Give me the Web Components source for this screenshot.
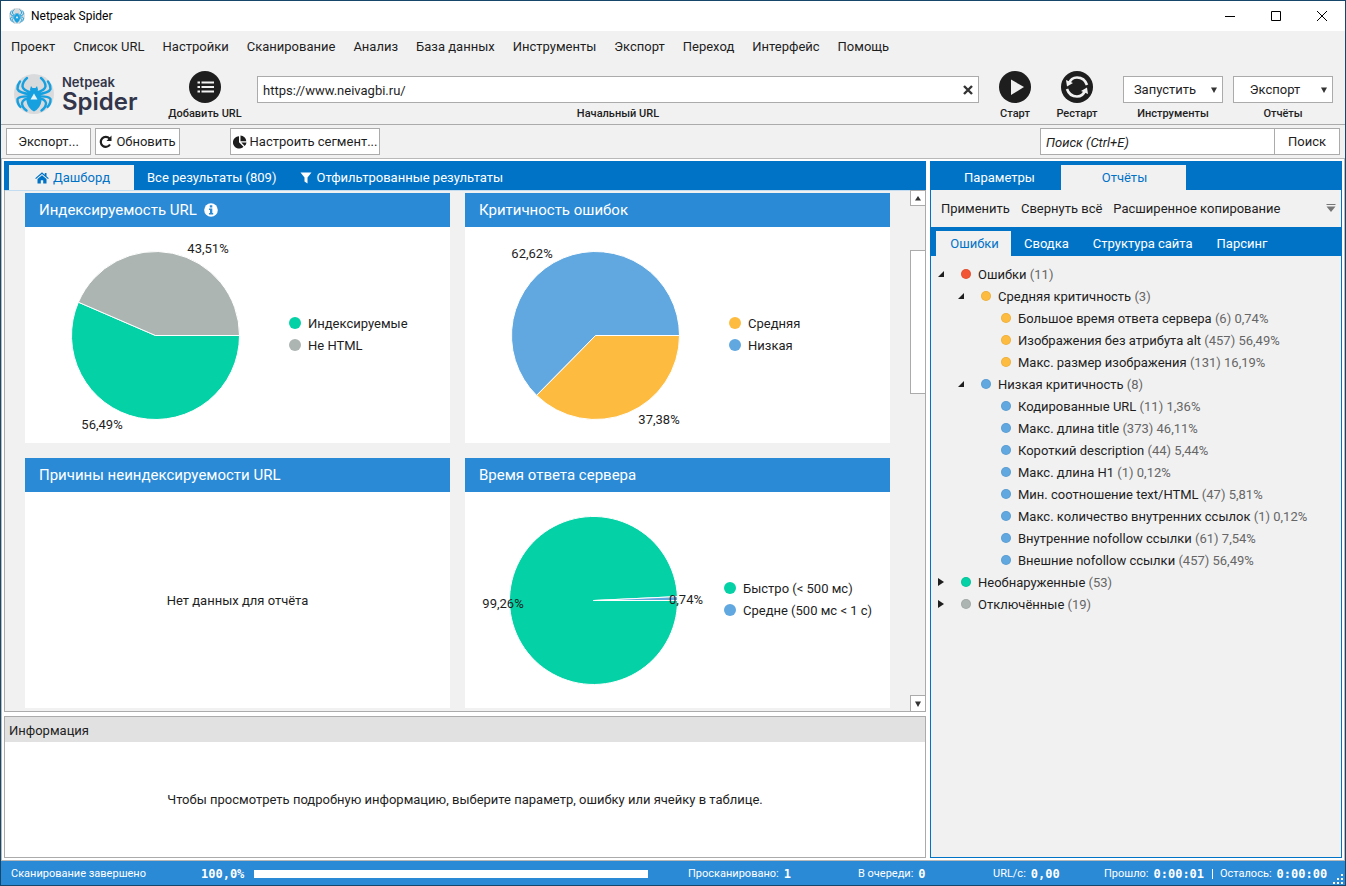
<!DOCTYPE html>
<html lang="ru">
<head>
<meta charset="utf-8">
<title>Netpeak Spider</title>
<style>
html,body{margin:0;height:100%}
body{font:13px/19px Roboto,"Noto Sans",sans-serif;color:#1e1e1e;
--bar:#0173c7;--head:#2b8ad6;--bg:#f1f1f1;--line:#ababab;--mid:#fdbc40;--low:#61a8e0;--ok:#04d1a5;--off:#adb5b3;--err:#f25533}
</style>
</head>
<body>
<spider-app></spider-app>
<script>
const define=(name,html,setup)=>{
  const t=document.createElement('template');
  t.innerHTML='<style>*{box-sizing:border-box}button,input,select{font:inherit;color:inherit;margin:0;border-radius:0}</style>'+html;
  customElements.define(name,class extends HTMLElement{
    constructor(){
      super();
      this.attachShadow({mode:'open'}).append(t.content.cloneNode(true));
    }
    connectedCallback(){ if(setup&&!this.ready){this.ready=true;setup(this,this.shadowRoot)} }
  });
};

const ICONS={
  spider:['0 0 40 40','<circle cx="20" cy="20" r="20" fill="#d9dadc"/><g fill="none" stroke="#16a0e0" stroke-width="2.4" stroke-linejoin="round" stroke-linecap="round"><path d="M17 18.500C12 17 9 15 8.500 12.500C8.500 9 10 6.500 13 4M17 20.500C10 19.500 4.500 18 3.500 15C3.300 12 4 10 6 7.500M17 22.500C10 22 5 22.500 3.500 25C3.300 28 4.500 31 6.500 33M17 24C11 24.500 8.500 26.500 8 29C8 32 9.500 34.500 12.500 36.500"/><path d="M23 18.500C28 17 31 15 31.500 12.500C31.500 9 30 6.500 27 4M23 20.500C30 19.500 35.500 18 36.500 15C36.700 12 36 10 34 7.500M23 22.500C30 22 35 22.500 36.500 25C36.700 28 35.500 31 33.500 33M23 24C29 24.500 31.500 26.500 32 29C32 32 30.500 34.500 27.500 36.500"/></g><path fill="#16a0e0" d="M17 12L18.500 14H21.500L23 12L24 15.500L23.500 18Q27.500 22 27.500 27Q26.500 34 20 37.500Q13.500 34 12.500 27Q12.500 22 16.500 18L16 15.500Z"/><path fill="#e6f3fa" d="M20 19.500L23.500 25.500H16.500Z"/>'],
  list:['0 0 32 32','<circle cx="16" cy="16" r="16" fill="#1e1e1e"/><path stroke="#f1f1f1" stroke-width="2" d="M8.500 11.500H11M12.500 11.500H25M8.500 16H11M12.500 16H25M8.500 20.500H11M12.500 20.500H25"/>'],
  play:['0 0 32 32','<circle cx="16" cy="16" r="16" fill="#1e1e1e"/><path fill="#f1f1f1" d="M12 8.500L25 16L12 24Z"/>'],
  restart:['0 0 32 32','<circle cx="16" cy="16" r="16" fill="#1e1e1e"/><g fill="none" stroke="#f1f1f1" stroke-width="2.600"><path d="M8 12.500Q10 6.500 16 6.500Q23.500 6.500 26 14"/><path d="M24 19.500Q22 25.500 16 25.500Q8.500 25.500 6 18"/></g><path fill="#f1f1f1" d="M5 9L12 12L6 15.500ZM27 23L20 20L26 16.500Z"/>'],
  clear:['0 0 12 12','<path d="M2 2L10 10M10 2L2 10" stroke="#333" stroke-width="2.400"/>'],
  refresh:['0 0 14 14','<path d="M11 9.500A5 5 0 1 1 10.500 3.500" fill="none" stroke="#1e1e1e" stroke-width="2.200"/><path fill="#1e1e1e" d="M12.500 0.500V6H7.500Z"/>'],
  pie:['0 0 14 14','<path fill="#1e1e1e" d="M6 1.200V7.300L10.500 11.800A6.200 6.200 0 1 1 6 1.200Z"/><path fill="#1e1e1e" d="M7.500 0.500A6.200 6.200 0 0 1 13.300 6.300H7.500ZM8.300 7.500H13.500A6 6 0 0 1 11.700 11Z"/>'],
  home:['0 0 14 14','<path fill="currentColor" d="M7 1.300L9.800 3.700V2H11.500V5.200L13.800 7.200L13 8.100L7 3L1 8.100L0.200 7.200ZM2.500 8L7 4.200L11.500 8V12.500H8.200V9.300H5.800V12.500H2.500Z"/>'],
  filter:['0 0 12 12','<path fill="currentColor" d="M0.500 0.500H11.500L7.500 5.500V11.500L4.500 9.500V5.500Z"/>'],
  info:['0 0 14 14','<circle cx="7" cy="7" r="6.800" fill="#fff"/><path fill="#2b8ad6" d="M5.800 2.300H8.300V4.500H5.800ZM5 5.500H8.300V10H9.200V11.500H5V10H6V7H5Z"/>'],
  down:['0 0 8 8','<path fill="#333" d="M1 1.500H7L4 7Z"/>'],
  up:['0 0 8 8','<path fill="#333" d="M1 6.500H7L4 2Z"/>'],
  more:['0 0 10 10','<path fill="#777" d="M0.500 0H9.500V1H0.500ZM0.500 2.500H9.500L5 8Z"/>'],
  open:['0 0 8 8','<path fill="#1e1e1e" d="M7 1V7H1Z"/>'],
  shut:['0 0 8 8','<path fill="#1e1e1e" d="M1 0L7 4L1 8Z"/>'],
  min:['0 0 10 10','<path d="M0 5.500H10" stroke="#000"/>'],
  max:['0 0 10 10','<path d="M0.500 0.500H9.500V9.500H0.500Z" stroke="#000" fill="none"/>'],
  close:['0 0 10 10','<path d="M0 0L10 10M10 0L0 10" stroke="#000"/>'],
  grip:['0 0 12 12','<path fill="#fff" d="M9 1h2v2h-2zM9 5h2v2h-2zM9 9h2v2h-2zM5 5h2v2h-2zM5 9h2v2h-2zM1 9h2v2h-2z"/>']
};
define('ui-icon','<style>:host{display:block;flex:none;width:var(--s,12px);height:var(--s,12px)}svg{display:block;width:100%;height:100%}</style><svg aria-hidden="true"></svg>',(h,r)=>{
  const [vb,body]=ICONS[h.getAttribute('name')];
  const s=r.querySelector('svg'); s.setAttribute('viewBox',vb); s.innerHTML=body;
  if(h.hasAttribute('size')) h.style.setProperty('--s',h.getAttribute('size')+'px');
});

define('title-bar',`<style>:host{display:flex;align-items:center;height:30px;background:#fff;padding-left:8px;gap:6px;color:#000;font-size:12px;line-height:16px}
span{flex:1}button{width:46px;height:30px;border:0;background:none;padding:0;display:grid;place-items:center}nav{display:flex}</style>
<ui-icon name="spider" size="16"></ui-icon><span>Netpeak Spider</span>
<nav><button aria-label="Свернуть"><ui-icon name="min" size="10"></ui-icon></button><button aria-label="Развернуть"><ui-icon name="max" size="10"></ui-icon></button><button aria-label="Закрыть"><ui-icon name="close" size="10"></ui-icon></button></nav>`);

define('main-menu',`<style>:host{display:block}nav{display:flex;gap:18px;height:31px;align-items:center;padding:0 10px}button{border:0;background:none;padding:0;white-space:nowrap}</style><nav></nav>`,(h,r)=>{
  r.querySelector('nav').innerHTML=h.getAttribute('items').split('|').map(x=>`<button>${x}</button>`).join('');
});

define('tool-button',`<style>:host{display:block}button{border:0;background:none;padding:0;display:flex;flex-direction:column;align-items:center;gap:3px;width:100%;font-size:11px;line-height:16px;font-weight:500;white-space:nowrap}</style><button><slot></slot></button>`,(h,r)=>{
  const i=document.createElement('ui-icon'); i.setAttribute('name',h.getAttribute('icon')); i.setAttribute('size','32');
  r.querySelector('button').prepend(i);
});

define('tool-select',`<style>:host{display:block;width:100px}label{display:flex;flex-direction:column;align-items:center;gap:3px;font-size:11px;line-height:16px;font-weight:500}
div{position:relative;width:100%;height:27px;font-size:13px;font-weight:400}select{appearance:none;width:100%;height:27px;border:1px solid var(--line);background:#fff;padding:1px 16px 0 0;text-align:center;text-align-last:center}
ui-icon{position:absolute;right:5px;top:10px;pointer-events:none}</style><label><div><select><option></option></select><ui-icon name="down" size="8"></ui-icon></div><span></span></label>`,(h,r)=>{
  r.querySelector('option').textContent=h.getAttribute('value'); r.querySelector('span').textContent=h.getAttribute('caption');
});

define('brand-logo',`<style>:host{display:flex;align-items:center;gap:8px;font-family:Inter,sans-serif;color:#33364a;font-weight:600}
div{padding-top:2px}b{display:block;font-size:13px;line-height:14px;font-weight:600}b+b{font-size:24px;line-height:26px}</style>
<ui-icon name="spider" size="40"></ui-icon><div><b>Netpeak</b><b>Spider</b></div>`);

define('main-toolbar',`<style>:host{display:flex;height:63px;padding:9px 12px 0 13px;border-bottom:1px solid var(--line);align-items:flex-start}
brand-logo{width:153px;height:46px}.url{flex:1;margin:5px 20px 0 14px;display:flex;flex-direction:column;gap:3px;font-size:11px;line-height:16px;font-weight:500;text-align:center}
.box{display:flex;align-items:center;height:27px;background:#fff;border:1px solid var(--line);padding-right:4px}
input{flex:1;min-width:0;border:0;outline:0;background:none;padding:1px 5px 0;font-size:13px;font-weight:400;height:25px}
.box button{border:0;background:none;padding:0}
.add{width:76px}.st{width:32px}.re{width:44px;margin:0 24px}.sel{display:flex;gap:10px;padding-top:5px}</style>
<brand-logo></brand-logo><tool-button class="add" icon="list">Добавить URL</tool-button>
<div class="url"><div class="box"><input id="u" type="text" value="https://www.neivagbi.ru/"><button aria-label="Очистить"><ui-icon name="clear" size="12"></ui-icon></button></div><label for="u">Начальный URL</label></div>
<tool-button class="st" icon="play">Старт</tool-button><tool-button class="re" icon="restart">Рестарт</tool-button>
<div class="sel"><tool-select value="Запустить" caption="Инструменты"></tool-select><tool-select value="Экспорт" caption="Отчёты"></tool-select></div>`);

define('action-bar',`<style>:host{display:flex;height:33px;padding:3px 5px}button{height:27px;border:1px solid var(--line);background:#fff;display:flex;align-items:center;justify-content:center;gap:3px;padding:0;white-space:nowrap}
.a{width:85px}.b{width:85px;margin-left:4px}.c{width:150px;margin-left:50px}form{display:flex;margin-left:auto}
input{width:235px;border:1px solid var(--line);background:#fff;padding:1px 5px 0;height:27px;outline:0}input::placeholder{font-style:italic;color:#1e1e1e;opacity:1}form button{width:66px;margin-left:-1px}</style>
<button class="a">Экспорт...</button><button class="b"><ui-icon name="refresh" size="14"></ui-icon>Обновить</button><button class="c"><ui-icon name="pie" size="14"></ui-icon>Настроить сегмент...</button>
<form><input type="search" aria-label="Поиск" placeholder="Поиск (Ctrl+E)"><button type="button">Поиск</button></form>`);

define('tab-strip',`<style>:host{display:flex;flex:none;height:29px;background:var(--bar);padding:4px 0 0 var(--pad,5px)}
button{border:0;background:none;color:#fff;padding:0 11px 0 13px;display:flex;align-items:center;justify-content:center;gap:4px;min-width:var(--tab,0);white-space:nowrap}
button[aria-selected=true]{background:var(--bg);color:var(--bar);min-width:var(--on,0)}div{display:flex}</style><div role="tablist"></div>`,(h,r)=>{
  const on=+h.getAttribute('active');
  r.querySelector('div').innerHTML=h.getAttribute('tabs').split('|').map((x,i)=>{
    const [t,ic]=x.split('@');
    return `<button role="tab" aria-selected="${i===on}">${ic?`<ui-icon name="${ic}" size="${ic==='home'?14:12}"></ui-icon>`:''}${t}</button>`;
  }).join('');
});

define('report-card',`<style>:host{display:flex;flex-direction:column;height:250px;background:#fff;min-width:0}
h2{margin:0;height:34px;display:flex;align-items:center;gap:7px;padding:0 14px;background:var(--head);color:#fff;font-size:15px;line-height:21px;font-weight:400}
section{flex:1;display:flex;align-items:center}</style><h2><slot name="title"></slot></h2><section><slot></slot></section>`);

define('pie-chart',`<style>:host{display:flex;align-items:center}svg{display:block;flex:none}text{font-size:13px;fill:#1e1e1e;text-anchor:middle}
ul{list-style:none;margin:0;padding:0 0 2px}li{height:22px;display:flex;align-items:center;gap:7px;white-space:nowrap}i{width:12px;height:12px;border-radius:50%}</style><svg height="216"></svg><ul></ul>`,(h,r)=>{
  const d=JSON.parse(h.getAttribute('data')), svg=r.querySelector('svg'), R=84, cx=d.cx, cy=108.5;
  svg.setAttribute('width',d.width);
  const pt=f=>[cx+R*Math.cos(f*2*Math.PI),cy+R*Math.sin(f*2*Math.PI)].map(v=>v.toFixed(2)).join(' ');
  let at=0, out='', text='', list='';
  for(const s of d.parts){
    const end=at+s.share;
    out+=`<path d="M${cx} ${cy}L${pt(at)}A${R} ${R} 0 ${s.share>.5?1:0} 1 ${pt(end)}Z" fill="var(${s.color})" stroke="#fff" stroke-width="1"/>`;
    text+=`<text x="${s.x}" y="${s.y}">${s.label}</text>`;
    list+=`<li><i style="background:var(${s.color})"></i>${s.name}</li>`;
    at=end;
  }
  svg.innerHTML=out+text; r.querySelector('ul').innerHTML=list.replace(/< /g,'&lt; ');
});

define('scroll-bar',`<style>:host{display:flex;flex-direction:column;width:15px;flex:none}button{height:16px;width:15px;padding:0;border:1px solid var(--line);background:#fff;display:grid;place-items:center;border-right:0}
button:last-child{border-bottom:0}div{flex:1;padding:44px 0 0}i{display:block;height:144px;border:1px solid var(--line);border-right:0;background:#fff}</style>
<button aria-label="Вверх"><ui-icon name="up" size="8"></ui-icon></button><div><i></i></div><button aria-label="Вниз"><ui-icon name="down" size="8"></ui-icon></button>`);

define('results-panel',`<style>:host{display:flex;flex-direction:column;min-height:0;overflow:hidden}tab-strip{--on:125px}
.body{flex:1;min-height:0;display:flex;background:var(--bg);border:1px solid var(--line);border-top:0}
.grid{flex:1;display:grid;grid-template-columns:1fr 1fr;gap:15px;border-top:1px solid #c3dcf0;padding:2px 20px 0;align-content:start;overflow:hidden}
p{margin:0;flex:1;text-align:center}</style>
<tab-strip active="0" tabs="Дашборд@home|Все результаты (809)|Отфильтрованные результаты@filter"></tab-strip>
<div class="body"><div class="grid">
<report-card><span slot="title">Индексируемость URL</span><ui-icon slot="title" name="info" size="14"></ui-icon>
<pie-chart data='{"width":264,"cx":130.5,"parts":[{"share":0.5649,"color":"--ok","label":"56,49%","x":77,"y":202,"name":"Индексируемые"},{"share":0.4351,"color":"--off","label":"43,51%","x":183,"y":26,"name":"Не HTML"}]}'></pie-chart></report-card>
<report-card><span slot="title">Критичность ошибок</span>
<pie-chart data='{"width":264,"cx":130.5,"parts":[{"share":0.3738,"color":"--mid","label":"37,38%","x":194,"y":197,"name":"Средняя"},{"share":0.6262,"color":"--low","label":"62,62%","x":67,"y":31,"name":"Низкая"}]}'></pie-chart></report-card>
<report-card><span slot="title">Причины неиндексируемости URL</span><p>Нет данных для отчёта</p></report-card>
<report-card><span slot="title">Время ответа сервера</span>
<pie-chart data='{"width":259,"cx":128.5,"parts":[{"share":0.9926,"color":"--ok","label":"99,26%","x":38,"y":116,"name":"Быстро (&lt; 500 мс)"},{"share":0.0074,"color":"--low","label":"0,74%","x":221,"y":112,"name":"Средне (500 мс &lt; 1 с)"}]}'></pie-chart></report-card>
</div><scroll-bar></scroll-bar></div>`);

define('info-panel',`<style>:host{display:flex;flex-direction:column;border:1px solid var(--line);background:#fff}
h2{margin:0;font-size:13px;line-height:19px;font-weight:400;background:#e1e1e1;padding:4px 4px 2px}p{margin:0;flex:1;display:grid;place-items:center}</style>
<h2>Информация</h2><p>Чтобы просмотреть подробную информацию, выберите параметр, ошибку или ячейку в таблице.</p>`);

define('tree-item',`<style>:host{display:block}.row{display:flex;align-items:center;height:22px;gap:7px;white-space:nowrap;padding-left:calc(var(--level)*20px)}
button{border:0;background:none;padding:0;width:8px;height:8px;margin-right:9px}.none{visibility:hidden}i{width:10px;height:10px;border-radius:50%;box-shadow:inset 0 0 0 1px #0001}
span{color:#666}p{margin:0}</style><div class="row"><button></button><i></i><p><slot></slot> <span></span></p></div>`,(h,r)=>{
  const b=r.querySelector('button'), s=h.getAttribute('state');
  h.style.setProperty('--level',h.getAttribute('level'));
  if(s){b.innerHTML=`<ui-icon name="${s}" size="8"></ui-icon>`;b.setAttribute('aria-label',s==='open'?'Свернуть':'Развернуть')} else b.className='none';
  r.querySelector('i').style.background=`var(--${h.getAttribute('tone')})`;
  r.querySelector('span').textContent=h.getAttribute('count');
});

define('report-panel',`<style>:host{display:flex;flex-direction:column;background:var(--bg);border:1px solid var(--bar);border-top:0}
.t1{--pad:5px;--tab:125px;--on:125px}.t2{--on:75px}.acts{display:flex;align-items:center;gap:11px;height:37px;padding:0 5px 0 10px}
.acts button{border:0;background:none;padding:0;white-space:nowrap}.acts .m{margin-left:auto}.tree{padding:7px 6px}</style>
<tab-strip class="t1" active="1" tabs="Параметры|Отчёты"></tab-strip>
<div class="acts"><button>Применить</button><button>Свернуть всё</button><button>Расширенное копирование</button><button class="m" aria-label="Ещё"><ui-icon name="more" size="10"></ui-icon></button></div>
<tab-strip class="t2" active="0" tabs="Ошибки|Сводка|Структура сайта|Парсинг"></tab-strip>
<div class="tree">
<tree-item level="0" state="open" tone="err" count="(11)">Ошибки</tree-item>
<tree-item level="1" state="open" tone="mid" count="(3)">Средняя критичность</tree-item>
<tree-item level="2" tone="mid" count="(6) 0,74%">Большое время ответа сервера</tree-item>
<tree-item level="2" tone="mid" count="(457) 56,49%">Изображения без атрибута alt</tree-item>
<tree-item level="2" tone="mid" count="(131) 16,19%">Макс. размер изображения</tree-item>
<tree-item level="1" state="open" tone="low" count="(8)">Низкая критичность</tree-item>
<tree-item level="2" tone="low" count="(11) 1,36%">Кодированные URL</tree-item>
<tree-item level="2" tone="low" count="(373) 46,11%">Макс. длина title</tree-item>
<tree-item level="2" tone="low" count="(44) 5,44%">Короткий description</tree-item>
<tree-item level="2" tone="low" count="(1) 0,12%">Макс. длина H1</tree-item>
<tree-item level="2" tone="low" count="(47) 5,81%">Мин. соотношение text/HTML</tree-item>
<tree-item level="2" tone="low" count="(1) 0,12%">Макс. количество внутренних ссылок</tree-item>
<tree-item level="2" tone="low" count="(61) 7,54%">Внутренние nofollow ссылки</tree-item>
<tree-item level="2" tone="low" count="(457) 56,49%">Внешние nofollow ссылки</tree-item>
<tree-item level="0" state="shut" tone="ok" count="(53)">Необнаруженные</tree-item>
<tree-item level="0" state="shut" tone="off" count="(19)">Отключённые</tree-item>
</div>`);

define('status-bar',`<style>:host{display:grid;grid-template-columns:190px 53px minmax(0,1fr) 210px 135px 111px 108px 120px 12px;align-items:center;height:24px;background:var(--head);color:#fff;font-size:11px;line-height:17px;padding:1px 1px 0 10px;white-space:nowrap}
b{font:700 12px/16px "DejaVu Sans Mono",monospace}progress{appearance:none;border:0;width:100%;height:8px;display:block;background:#fff}
progress::-webkit-progress-bar{background:#fff}progress::-webkit-progress-value{background:#fff}
span{display:flex;gap:5px;align-items:center}.first{padding-left:40px}.sep{border-left:1px solid #fff;line-height:10px;padding-left:7px;height:10px}ui-icon{align-self:end}</style>
<span>Сканирование завершено</span><b>100,0%</b><progress aria-label="Ход сканирования" value="100" max="100"></progress>
<span class="first">Просканировано: <b>1</b></span><span>В очереди: <b>0</b></span><span>URL/с: <b>0,00</b></span><span>Прошло: <b>0:00:01</b></span><span class="sep">Осталось: <b>0:00:00</b></span><ui-icon name="grip" size="12"></ui-icon>`);

define('spider-app',`<style>:host{display:flex;flex-direction:column;min-height:100vh;box-sizing:border-box;border:1px solid #17466b;background:var(--bg)}
main{flex:1;display:grid;grid-template-columns:minmax(0,1fr) 412px;grid-template-rows:minmax(0,1fr) 142px;gap:4px;background:#fff;border:1px solid #b9b9b9;padding:2px}
report-panel{grid-column:2;grid-row:1/3}results-panel{grid-column:1;grid-row:1}info-panel{grid-column:1;grid-row:2}</style>
<title-bar></title-bar>
<main-menu items="Проект|Список URL|Настройки|Сканирование|Анализ|База данных|Инструменты|Экспорт|Переход|Интерфейс|Помощь"></main-menu>
<main-toolbar></main-toolbar><action-bar></action-bar>
<main><results-panel></results-panel><report-panel></report-panel><info-panel></info-panel></main>
<status-bar></status-bar>`);
</script>
</body>
</html>
